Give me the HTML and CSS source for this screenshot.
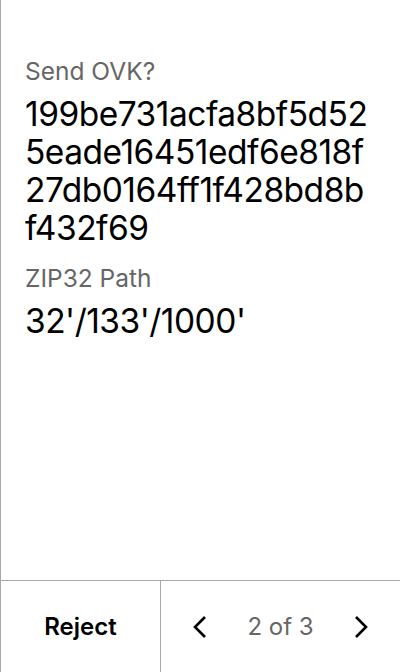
FILE: index.html
```html
<!DOCTYPE html>
<html>
<head>
<meta charset="utf-8">
<link rel="stylesheet" href="styles.css">
</head>
<body>
<div class="screen">
  <main class="content">
    <div class="field">
      <div class="label">Send OVK?</div>
      <div class="value hex">199be731acfa8bf5d52<br>5eade16451edf6e818f<br>27db0164ff1f428bd8b<br>f432f69</div>
    </div>
    <div class="field">
      <div class="label">ZIP32 Path</div>
      <div class="value">32'/133'/1000'</div>
    </div>
  </main>
  <footer class="footer">
    <div class="reject">Reject</div>
    <div class="pager">
      <svg class="chev" width="16" height="26" viewBox="0 0 16 26"><path d="M13 3 L3 13 L13 23" fill="none" stroke="#000" stroke-width="2.6"/></svg>
      <span class="count">2 of 3</span>
      <svg class="chev" width="16" height="26" viewBox="0 0 16 26"><path d="M3 3 L13 13 L3 23" fill="none" stroke="#000" stroke-width="2.6"/></svg>
    </div>
  </footer>
</div>
</body>
</html>
```
FILE: styles.css
```css
html, body {
  margin: 0;
  padding: 0;
  background: #fff;
}
body {
  font-family: Inter, "Noto Sans", sans-serif;
  color: #000;
}
.screen {
  width: 400px;
  height: 672px;
  box-sizing: border-box;
  border-left: 1px solid #a8a8a8;
  display: flex;
  flex-direction: column;
}
.content {
  flex: 1;
  padding: 56px 24px 0 24px;
  display: flex;
  flex-direction: column;
  gap: 16px;
}
.field {
  display: flex;
  flex-direction: column;
  gap: 9px;
}
.label {
  font-size: 24.5px;
  line-height: 30px;
  color: #666;
}
.value {
  font-size: 33.5px;
  line-height: 38px;
  letter-spacing: -0.5px;
  color: #000;
}
.hex {
  white-space: nowrap;
}
.footer {
  height: 92px;
  border-top: 1px solid #a8a8a8;
  box-sizing: border-box;
  display: flex;
}
.reject {
  width: 159px;
  border-right: 1px solid #a8a8a8;
  display: flex;
  align-items: center;
  justify-content: center;
  font-size: 24px;
  font-weight: 600;
}
.pager {
  flex: 1;
  display: flex;
  align-items: center;
  justify-content: space-between;
  padding: 0 31px 0 31px;
}
.count {
  font-size: 24px;
  color: #666;
}
.chev {
  display: block;
}
```
